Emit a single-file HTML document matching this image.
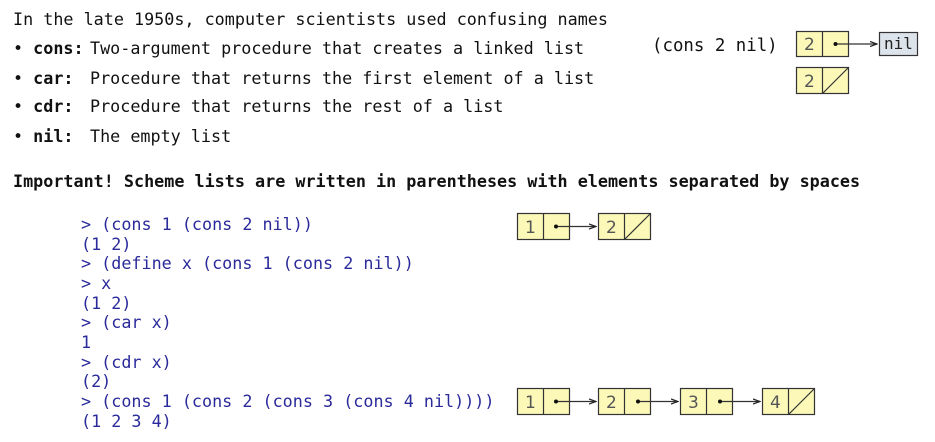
<!DOCTYPE html>
<html><head><style>
body{margin:0;width:935px;height:442px;background:#fff;position:relative;overflow:hidden;font-family:"DejaVu Sans Mono","Liberation Mono",monospace;font-size:16.75px;color:#111}
.t{position:absolute;white-space:pre;line-height:20px}
b{font-weight:bold}
.c{color:#2a2a9a}
svg{position:absolute;left:0;top:0}
</style></head><body>
<div class="t" style="left:13px;top:9px">In the late 1950s, computer scientists used confusing names</div>
<div class="t" style="left:13px;top:38px">• <b>cons:</b></div><div class="t" style="left:90px;top:38px">Two-argument procedure that creates a linked list</div>
<div class="t" style="left:13px;top:68px">• <b>car:</b></div><div class="t" style="left:90px;top:68px">Procedure that returns the first element of a list</div>
<div class="t" style="left:13px;top:96px">• <b>cdr:</b></div><div class="t" style="left:90px;top:96px">Procedure that returns the rest of a list</div>
<div class="t" style="left:13px;top:126px">• <b>nil:</b></div><div class="t" style="left:90px;top:126px">The empty list</div>
<div class="t" style="left:652px;top:36px;font-size:17.4px">(cons 2 nil)</div>
<div class="t" style="left:13px;top:171px"><b>Important! Scheme lists are written in parentheses with elements separated by spaces</b></div>
<div class="t c" style="left:81px;top:215px;line-height:19.65px">&gt; (cons 1 (cons 2 nil))
(1 2)
&gt; (define x (cons 1 (cons 2 nil))
&gt; x
(1 2)
&gt; (car x)
1
&gt; (cdr x)
(2)
&gt; (cons 1 (cons 2 (cons 3 (cons 4 nil))))
(1 2 3 4)</div>
<svg width="935" height="442" font-family="DejaVu Sans, sans-serif" font-size="17" fill="#555">
<defs><marker id="a" markerWidth="8" markerHeight="8" refX="7" refY="4" orient="auto" markerUnits="userSpaceOnUse"><path d="M0,1.5 L7,4 L0,6.5" fill="none" stroke="#222" stroke-width="1.2"/></marker></defs>
<g stroke="#333" stroke-width="1.2">
<rect x="796.5" y="31.5" width="52" height="25" fill="#fbf8b8"/><line x1="822.5" y1="31.5" x2="822.5" y2="56.5"/>
<rect x="879.5" y="32.5" width="38" height="23" fill="#dde3ea"/>
<line x1="835.5" y1="44" x2="877" y2="44" marker-end="url(#a)"/>
<rect x="796.5" y="67.5" width="52" height="26" fill="#fbf8b8"/><line x1="822.5" y1="67.5" x2="822.5" y2="93.5"/><line x1="822.5" y1="93.5" x2="848.5" y2="67.5"/>
<rect x="517.5" y="213.5" width="52" height="26" fill="#fbf8b8"/><line x1="543.5" y1="213.5" x2="543.5" y2="239.5"/>
<line x1="556" y1="226.5" x2="596" y2="226.5" marker-end="url(#a)"/>
<rect x="598.5" y="213.5" width="52" height="26" fill="#fbf8b8"/><line x1="624.5" y1="213.5" x2="624.5" y2="239.5"/><line x1="624.5" y1="239.5" x2="650.5" y2="213.5"/>
<rect x="517.5" y="388.5" width="52" height="26" fill="#fbf8b8"/><line x1="543.5" y1="388.5" x2="543.5" y2="414.5"/>
<line x1="556" y1="401.5" x2="596" y2="401.5" marker-end="url(#a)"/>
<rect x="598.5" y="388.5" width="52" height="26" fill="#fbf8b8"/><line x1="624.5" y1="388.5" x2="624.5" y2="414.5"/>
<line x1="638" y1="401.5" x2="678" y2="401.5" marker-end="url(#a)"/>
<rect x="680.5" y="388.5" width="52" height="26" fill="#fbf8b8"/><line x1="706.5" y1="388.5" x2="706.5" y2="414.5"/>
<line x1="720" y1="401.5" x2="760" y2="401.5" marker-end="url(#a)"/>
<rect x="762.5" y="388.5" width="52" height="26" fill="#fbf8b8"/><line x1="788.5" y1="388.5" x2="788.5" y2="414.5"/><line x1="788.5" y1="414.5" x2="814.5" y2="388.5"/>
</g>
<g fill="#111"><circle cx="835.5" cy="44" r="2"/><circle cx="556" cy="226.5" r="2"/><circle cx="556" cy="401.5" r="2"/><circle cx="638" cy="401.5" r="2"/><circle cx="720" cy="401.5" r="2"/></g>
<text x="804" y="50">2</text><text x="804" y="87">2</text>
<text x="525" y="233">1</text><text x="606" y="233">2</text>
<text x="525" y="408">1</text><text x="606" y="408">2</text><text x="688" y="408">3</text><text x="770" y="408">4</text>
<text x="884" y="49" font-size="16" font-family="DejaVu Sans Mono, monospace" fill="#222">nil</text>
</svg>
</body></html>
